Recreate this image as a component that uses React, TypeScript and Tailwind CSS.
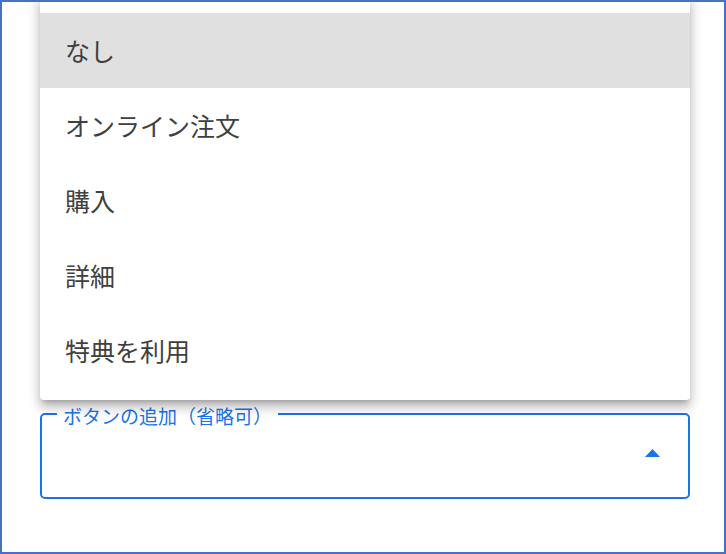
const options = ['なし', 'オンライン注文', '購入', '詳細', '特典を利用'];

const jp = { fontFamily: '"Noto Sans CJK JP", "Noto Sans", sans-serif' };

export default function App() {
  return (
    <div
      className="w-[726px] h-[554px] overflow-hidden bg-white border-2 border-[#4472c4] pl-[38px] pr-[34px]"
      style={jp}
    >
      <div className="flex flex-col">
        {/* open menu */}
        <div className="-mt-[6px] pt-[17px] pb-[12px] bg-white rounded-b-[4px] shadow-[0_5px_5px_-3px_rgba(0,0,0,0.2),0_8px_10px_1px_rgba(0,0,0,0.14),0_3px_14px_2px_rgba(0,0,0,0.12)] relative z-10">
          {options.map((o, i) => (
            <div
              key={o}
              className={`h-[75px] flex items-center pl-[25px] text-[25px] text-[#404040] ${
                i === 0 ? 'bg-[#e0e0e0]' : ''
              }`}
            >
              {o}
            </div>
          ))}
        </div>

        {/* select field */}
        <div className="mt-[13px] h-[86px] border-2 border-[#1a73e8] rounded-[5px] relative flex items-center justify-end pr-[28px]">
          <span className="absolute left-[15px] top-0 -translate-y-1/2 px-[6px] bg-white text-[19px] leading-none text-[#1a73e8]">
            ボタンの追加（省略可）
          </span>
          <svg width="15" height="8" viewBox="0 0 15 8" className="mb-[6px]">
            <polygon points="0,8 7.5,0 15,8" fill="#1a73e8" />
          </svg>
        </div>
      </div>
    </div>
  );
}
